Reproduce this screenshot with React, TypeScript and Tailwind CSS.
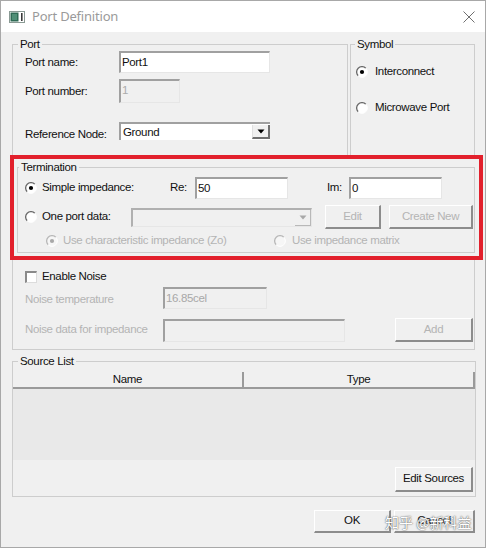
import React from "react";

const Radio = ({ checked, disabled }: { checked?: boolean; disabled?: boolean }) => (
  <svg width="12" height="12" viewBox="0 0 12 12" className="shrink-0">
    <circle cx="6" cy="6" r="5.3" fill={disabled ? "#f6f6f6" : "#ffffff"} />
    <path d="M9.8 2.2 A5.3 5.3 0 0 0 2.2 9.8" fill="none" stroke={disabled ? "#b8b8b8" : "#6a6a6a"} strokeWidth="1.3" />
    <path d="M2.2 9.8 A5.3 5.3 0 0 0 9.8 2.2" fill="none" stroke="#ffffff" strokeWidth="1" />
    {checked && <circle cx="6" cy="6" r="2.1" fill={disabled ? "#a8a8a8" : "#000000"} />}
  </svg>
);

const Arrow = ({ disabled }: { disabled?: boolean }) => (
  <svg width="8" height="5" viewBox="0 0 8 5">
    <path d="M0.5 0.5 H7.5 L4 4.5 Z" fill={disabled ? "#a8a8a8" : "#000"} />
  </svg>
);

export default function App() {
  const field =
    "border-t-2 border-l-2 border-t-[#a0a0a0] border-l-[#a0a0a0] border-r border-b border-r-[#e6e6e6] border-b-[#e6e6e6] pl-[1px] leading-[14px] pt-[2px]";
  const btn =
    "flex items-center justify-center bg-[#f0f0f0] border-t border-l border-t-white border-l-white border-r-2 border-b-2 border-r-[#8c8c8c] border-b-[#8c8c8c]";
  const frame = "border border-[#cdcdcd]";
  const legend = "px-[2px] leading-[14px]";

  return (
    <div className="w-[486px] h-[548px] bg-[#f0f0f0] border border-[#a8a8a8] flex flex-col relative overflow-hidden font-['Liberation_Sans',Arial,sans-serif] text-[11.5px] tracking-[-0.35px] text-[#111]">
      {/* Title bar */}
      <div className="h-[31px] bg-white flex items-center pl-[8px] pr-[10px] shrink-0">
        <svg width="16" height="12" viewBox="0 0 16 12" className="shrink-0">
          <rect x="0.5" y="0.5" width="15" height="11" fill="#ffffff" stroke="#8a9a94" />
          <rect x="1.5" y="1.5" width="8" height="9" fill="#2f6b55" />
          <rect x="3" y="3" width="5" height="6" fill="#4f8f76" />
          <rect x="12" y="2" width="1.6" height="8" fill="#3a3a3a" />
        </svg>
        <span className="ml-[7px] font-['Noto_Sans',sans-serif] text-[13px] tracking-[-0.2px] text-[#9a9a9a] leading-none">
          Port Definition
        </span>
        <div className="flex-1" />
        <svg width="12" height="12" viewBox="0 0 12 12">
          <path d="M0.5 0.5 L11.5 11.5 M11.5 0.5 L0.5 11.5" stroke="#6f6f6f" strokeWidth="1" />
        </svg>
      </div>

      <div className="pl-[11px] pr-[10px] flex flex-col">
        {/* Top row */}
        <div className="mt-[5px] flex gap-[2px] h-[119px]">
          <fieldset className={`${frame} w-[336px] h-full`}>
            <legend className={`${legend} ml-[5px]`}>Port</legend>
            <div className="flex flex-col">
              <div className="flex items-center h-[22px] pl-[12px]">
                <span className="w-[94px] pt-[2px]">Port name:</span>
                <div className={`${field} w-[151px] h-[22px] bg-white`}>Port1</div>
              </div>
              <div className="flex items-center h-[24px] mt-[6px] pl-[12px]">
                <span className="w-[94px] pt-[2px]">Port number:</span>
                <div className={`${field} w-[61px] h-[24px] bg-[#f0f0f0] text-[#ababab]`}>1</div>
              </div>
              <div className="flex items-center h-[18px] mt-[19px] pl-[12px]">
                <span className="w-[94px] pt-[7px]">Reference Node:</span>
                <div className="w-[151px] h-[18px] flex bg-white border-t-2 border-l-2 border-t-[#a0a0a0] border-l-[#a0a0a0]">
                  <span className="flex-1 pl-[2px] leading-[14px] pt-[1px]">Ground</span>
                  <div className="w-[18px] h-[14px] mt-[1px] flex items-center justify-center bg-[#f0f0f0] border-l border-l-[#e0e0e0] border-r-2 border-b-2 border-r-[#707070] border-b-[#707070]">
                    <Arrow />
                  </div>
                </div>
              </div>
            </div>
          </fieldset>
          <fieldset className={`${frame} flex-1 h-full`}>
            <legend className={`${legend} ml-[4px]`}>Symbol</legend>
            <div className="flex flex-col pl-[5px]">
              <div className="flex items-center h-[14px] mt-[14px] gap-[7px]">
                <Radio checked />
                <span>Interconnect</span>
              </div>
              <div className="flex items-center h-[14px] mt-[22px] gap-[7px]">
                <Radio />
                <span>Microwave Port</span>
              </div>
            </div>
          </fieldset>
        </div>

        {/* Termination (highlighted) */}
        <div className="-mt-[1px] -ml-[2px] w-[473px] h-[105px] border-4 border-[#e2202c] relative z-10">
          <fieldset className={`${frame} ml-[3px] mt-[1px] w-[458px] h-[93px]`}>
            <legend className={`${legend} ml-[1px]`}>Termination</legend>
            <div className="flex flex-col">
              <div className="flex items-center h-[22px] mt-[3px] pl-[7px]">
                <Radio checked />
                <span className="ml-[5px] w-[128px]">Simple impedance:</span>
                <span className="w-[25px]">Re:</span>
                <div className={`${field} w-[93px] h-[22px] bg-white`}>50</div>
                <span className="ml-[39px] w-[22px]">Im:</span>
                <div className={`${field} w-[93px] h-[22px] bg-white`}>0</div>
              </div>
              <div className="flex items-center h-[24px] mt-[6px] pl-[7px]">
                <Radio />
                <span className="ml-[5px] w-[89px]">One port data:</span>
                <div className="w-[181px] h-[19px] flex bg-[#f0f0f0] border-t-2 border-l-2 border-t-[#b0b0b0] border-l-[#b0b0b0] border-r border-b border-r-[#e6e6e6] border-b-[#e6e6e6]">
                  <span className="flex-1" />
                  <div className="w-[16px] h-full flex items-center justify-center border-r border-b border-r-[#b8b8b8] border-b-[#b8b8b8]">
                    <Arrow disabled />
                  </div>
                </div>
                <div className={`${btn} ml-[13px] w-[56px] h-[24px] text-[#b4b4b4]`}>Edit</div>
                <div className={`${btn} ml-[8px] w-[84px] h-[24px] text-[#b4b4b4]`}>Create New</div>
              </div>
              <div className="flex items-center h-[14px] mt-[5px] pl-[28px] text-[#b4b4b4]">
                <Radio checked disabled />
                <span className="ml-[5px] w-[211px]">Use characteristic impedance (Zo)</span>
                <Radio disabled />
                <span className="ml-[6px]">Use impedance matrix</span>
              </div>
            </div>
          </fieldset>
        </div>

        {/* Noise */}
        <div className="w-[463px] h-[90px] border-x border-b border-[#cdcdcd] flex flex-col">
          <div className="flex items-center h-[12px] mt-[11px] pl-[12px]">
            <div className="w-[12px] h-[12px] bg-white border-t-2 border-l-2 border-t-[#8a8a8a] border-l-[#8a8a8a] border-r border-b border-r-[#dcdcdc] border-b-[#dcdcdc]" />
            <span className="ml-[5px]">Enable Noise</span>
          </div>
          <div className="flex items-center h-[22px] mt-[4px] pl-[12px]">
            <span className="w-[138px] text-[#b4b4b4] pt-[3px]">Noise temperature</span>
            <div className={`${field} w-[104px] h-[22px] bg-[#f0f0f0] text-[#a8a8a8]`}>16.85cel</div>
          </div>
          <div className="flex items-center h-[24px] mt-[9px] pl-[12px]">
            <span className="w-[138px] text-[#b4b4b4]">Noise data for impedance</span>
            <div className={`${field} w-[182px] h-[23px] bg-[#f0f0f0]`} />
            <div className={`${btn} ml-[50px] w-[78px] h-[24px] text-[#b4b4b4]`}>Add</div>
          </div>
        </div>

        {/* Source list */}
        <fieldset className={`${frame} mt-[4px] w-[464px] h-[143px]`}>
          <legend className={`${legend} ml-[5px]`}>Source List</legend>
          <div className="flex flex-col">
            <div className="flex h-[17px] mt-[4px]">
              <div className="w-[231px] flex items-center justify-center bg-[#f0f0f0] border-r-2 border-b-2 border-r-[#9a9a9a] border-b-[#9a9a9a]">
                Name
              </div>
              <div className="flex-1 flex items-center justify-center bg-[#f0f0f0] border-r-2 border-b-2 border-r-[#9a9a9a] border-b-[#9a9a9a]">
                Type
              </div>
            </div>
            <div className="h-[71px] bg-[#e9e9e9]" />
            <div className="flex justify-end mt-[7px] pr-[2px]">
              <div className={`${btn} w-[78px] h-[25px]`}>Edit Sources</div>
            </div>
          </div>
        </fieldset>

        {/* Buttons */}
        <div className="flex justify-end gap-[3px] mt-[13px] relative">
          <div className={`${btn} w-[77px] h-[23px]`}>OK</div>
          <div className={`${btn} w-[81px] h-[23px]`}>Cancel</div>
          <span className="absolute left-[373px] top-[2px] font-['Noto_Sans_CJK_SC',sans-serif] text-[14px] tracking-normal text-white [text-shadow:0_0_1px_#555,0_0_2px_#777]">
            知乎 @新科益
          </span>
        </div>
      </div>
    </div>
  );
}
